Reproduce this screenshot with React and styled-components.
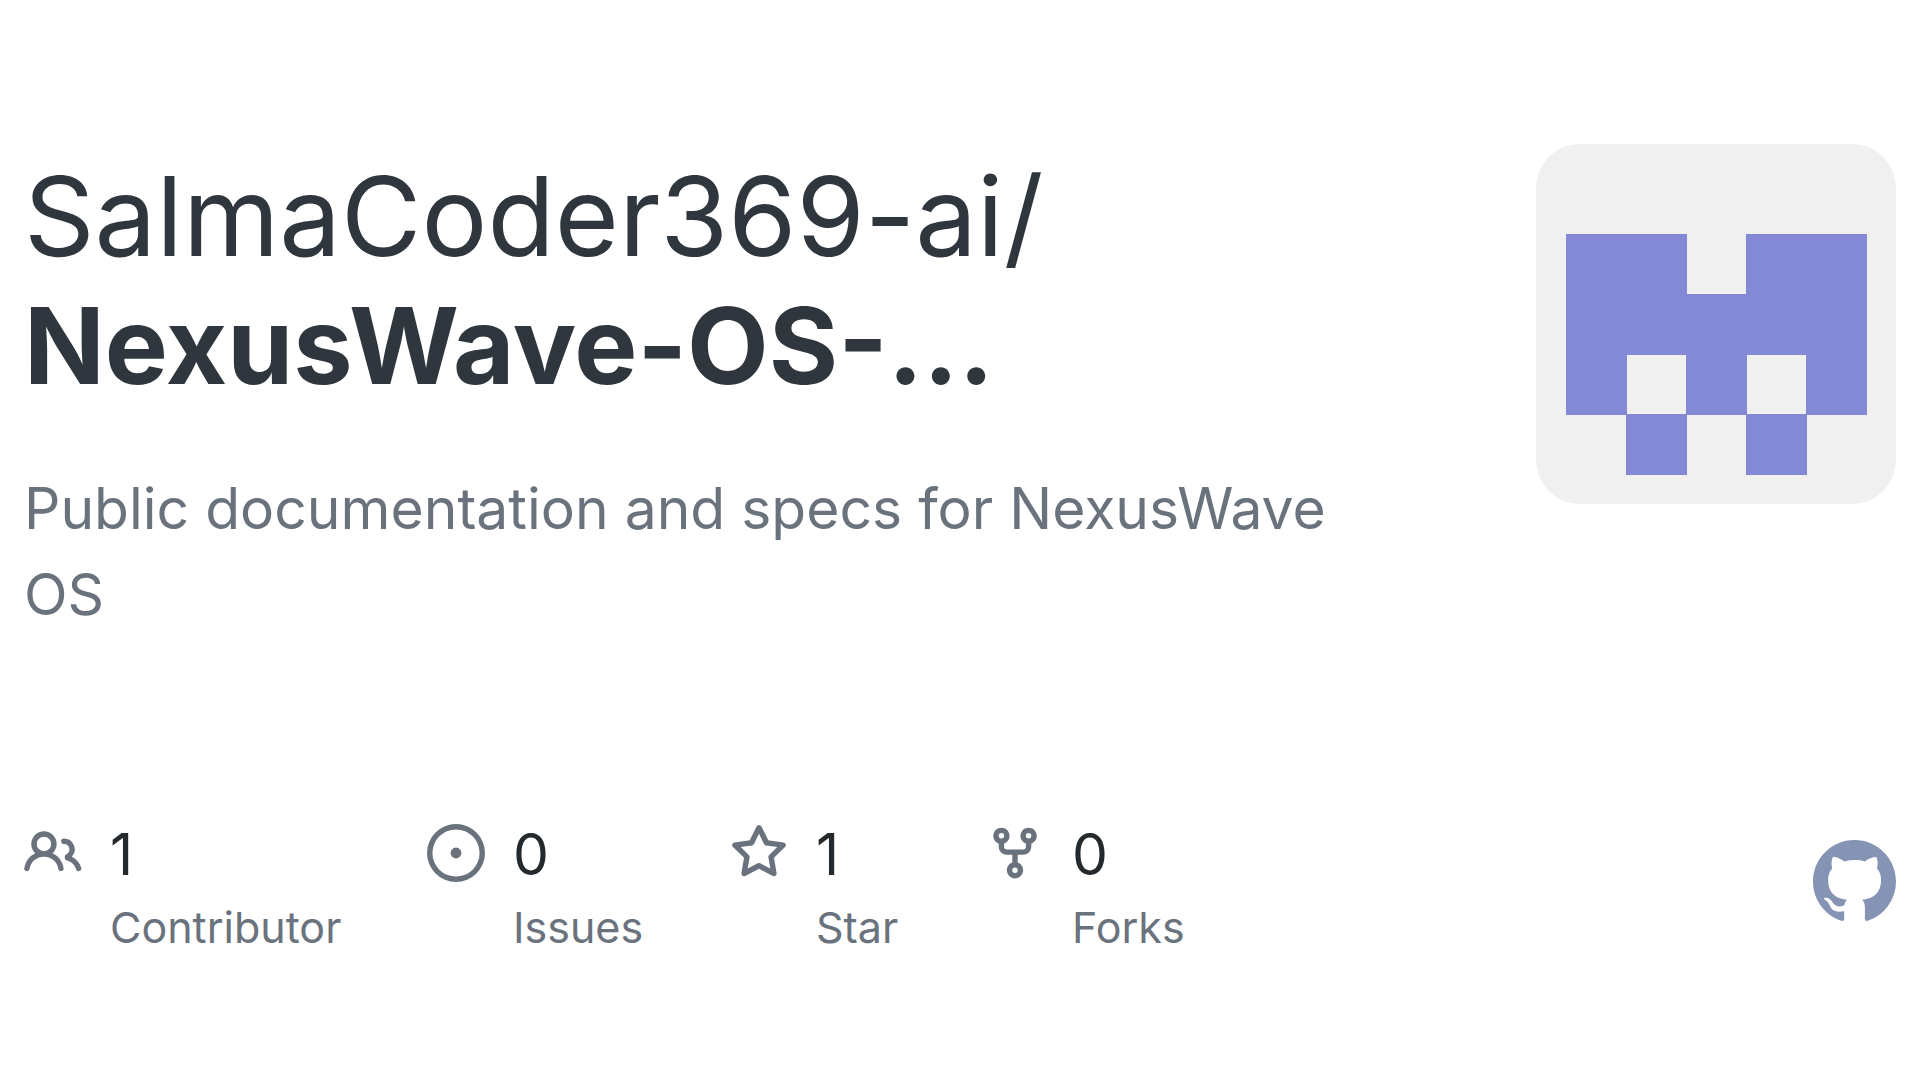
import React from "react";
import styled, { createGlobalStyle } from "styled-components";

const GlobalStyle = createGlobalStyle`
  * { box-sizing: border-box; }
  body {
    margin: 0;
    background: #fff;
    font-family: Inter, "Liberation Sans", sans-serif;
  }
`;

const Card = styled.main`
  padding: 144px 24px 120px;
`;

const Summary = styled.header`
  display: flex;
  align-items: flex-start;
  justify-content: space-between;
  gap: 152px;
`;

const Intro = styled.div`
  flex: 1;
  min-width: 0;
  padding-top: 8px;
`;

const Title = styled.h1`
  margin: 0;
  color: #2f363d;
  font-size: 110px;
  line-height: 129px;
  font-weight: 400;
`;

const RepoName = styled.strong`
  display: block;
  font-size: 106px;
  font-weight: 700;
`;

const Description = styled.p`
  margin: 56px 0 0;
  color: #6a737d;
  font-size: 57px;
  line-height: 86px;
`;

const Avatar = styled.svg`
  flex: none;
  width: 360px;
  height: 360px;
  border-radius: 44px;
  background: #f0f0f0;
`;

const Footer = styled.footer`
  display: flex;
  align-items: flex-start;
  justify-content: space-between;
  margin-top: 186px;
`;

const Stats = styled.ul`
  display: grid;
  grid-template-columns: 403px 303px 256px auto;
  margin: 0;
  padding: 0;
  list-style: none;
`;

const Stat = styled.li`
  display: flex;
  align-items: flex-start;
  gap: 28px;
`;

const StatIcon = styled.svg`
  flex: none;
  width: 58px;
  height: 58px;
  fill: #6a737d;
`;

const StatText = styled.div`
  display: flex;
  flex-direction: column;
`;

const Count = styled.span`
  color: #24292e;
  font-size: 57px;
  line-height: 62px;
`;

const Label = styled.span`
  margin-top: 12px;
  color: #6a737d;
  font-size: 43px;
  line-height: 58px;
`;

const Mark = styled.svg`
  flex: none;
  width: 83px;
  height: 83px;
  margin-top: 16px;
  fill: #8594b5;
`;

const stats = [
  {
    count: 1,
    label: "Contributor",
    path: "M5.5 3.5a2 2 0 100 4 2 2 0 000-4zM2 5.5a3.5 3.5 0 115.898 2.549 5.507 5.507 0 013.034 4.084.75.75 0 11-1.482.235 4.001 4.001 0 00-7.9 0 .75.75 0 01-1.482-.236A5.507 5.507 0 013.102 8.05 3.49 3.49 0 012 5.5zM11 4a.75.75 0 100 1.5 1.5 1.5 0 01.666 2.844.75.75 0 00-.416.672v.352a.75.75 0 00.574.73c1.2.289 2.162 1.2 2.522 2.372a.75.75 0 101.434-.44 5.01 5.01 0 00-2.56-3.012A3 3 0 0011 4z",
  },
  {
    count: 0,
    label: "Issues",
    path: "M8 9.5a1.5 1.5 0 100-3 1.5 1.5 0 000 3zM8 0a8 8 0 100 16A8 8 0 008 0zM1.5 8a6.5 6.5 0 1113 0 6.5 6.5 0 01-13 0z",
  },
  {
    count: 1,
    label: "Star",
    path: "M8 .25a.75.75 0 01.673.418l1.882 3.815 4.21.612a.75.75 0 01.416 1.279l-3.046 2.97.719 4.192a.75.75 0 01-1.088.791L8 12.347l-3.766 1.98a.75.75 0 01-1.088-.79l.72-4.194L.818 6.374a.75.75 0 01.416-1.28l4.21-.611L7.327.668A.75.75 0 018 .25zm0 2.445L6.615 5.5a.75.75 0 01-.564.41l-3.097.45 2.24 2.184a.75.75 0 01.216.664l-.528 3.084 2.769-1.456a.75.75 0 01.698 0l2.77 1.456-.53-3.084a.75.75 0 01.216-.664l2.24-2.183-3.096-.45a.75.75 0 01-.564-.41L8 2.694z",
  },
  {
    count: 0,
    label: "Forks",
    path: "M5 3.25a.75.75 0 11-1.5 0 .75.75 0 011.5 0zm0 2.122a2.25 2.25 0 10-1.5 0v.878A2.25 2.25 0 005.75 8.5h1.5v2.128a2.251 2.251 0 101.5 0V8.5h1.5a2.25 2.25 0 002.25-2.25v-.878a2.25 2.25 0 10-1.5 0v.878a.75.75 0 01-.75.75h-4.5A.75.75 0 015 6.25v-.878zm3.75 7.378a.75.75 0 11-1.5 0 .75.75 0 011.5 0zm3-8.75a.75.75 0 100-1.5.75.75 0 000 1.5z",
  },
];

export default function App() {
  return (
    <>
      <GlobalStyle />
      <Card>
        <Summary>
          <Intro>
            <Title>
              SalmaCoder369-ai/
              <RepoName>NexusWave-OS-…</RepoName>
            </Title>
            <Description>
              Public documentation and specs for NexusWave OS
            </Description>
          </Intro>
          <Avatar viewBox="0 0 360 360" aria-hidden="true">
            <path
              fill="#8489d6"
              fillRule="evenodd"
              d="M30 90H151V150H210V90H331V271H271V331H210V271H151V331H90V271H30ZM91 211V270H150V211ZM211 211V270H270V211Z"
            />
          </Avatar>
        </Summary>
        <Footer>
          <Stats>
            {stats.map((s) => (
              <Stat key={s.label}>
                <StatIcon viewBox="0 0 16 16" aria-hidden="true">
                  <path fillRule="evenodd" d={s.path} />
                </StatIcon>
                <StatText>
                  <Count>{s.count}</Count>
                  <Label>{s.label}</Label>
                </StatText>
              </Stat>
            ))}
          </Stats>
          <Mark viewBox="0 0 16 16" aria-hidden="true">
            <path d="M8 0C3.58 0 0 3.58 0 8c0 3.54 2.29 6.53 5.47 7.59.4.07.55-.17.55-.38 0-.19-.01-.82-.01-1.49-2.01.37-2.53-.49-2.69-.94-.09-.23-.48-.94-.82-1.13-.28-.15-.68-.52-.01-.53.63-.01 1.08.58 1.23.82.72 1.21 1.87.87 2.33.66.07-.52.28-.87.51-1.07-1.78-.2-3.64-.89-3.64-3.95 0-.87.31-1.59.82-2.15-.08-.2-.36-1.02.08-2.12 0 0 .67-.21 2.2.82.64-.18 1.32-.27 2-.27s1.36.09 2 .27c1.53-1.04 2.2-.82 2.2-.82.44 1.1.16 1.92.08 2.12.51.56.82 1.27.82 2.15 0 3.07-1.87 3.75-3.65 3.95.29.25.54.73.54 1.48 0 1.07-.01 1.93-.01 2.2 0 .21.15.46.55.38A8.01 8.01 0 0016 8c0-4.42-3.58-8-8-8z" />
          </Mark>
        </Footer>
      </Card>
    </>
  );
}
